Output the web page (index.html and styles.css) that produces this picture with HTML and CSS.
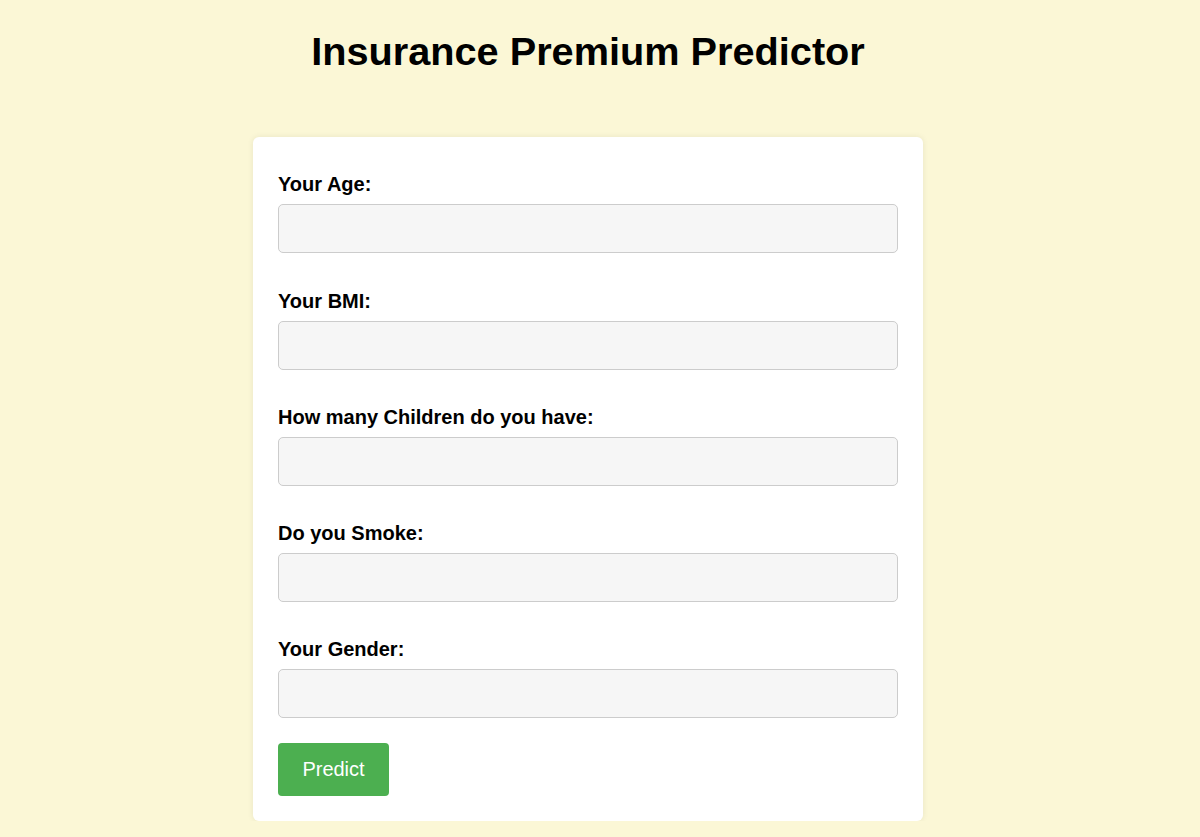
FILE: index.html
```html
<!DOCTYPE html>
<html lang="en">
<head>
<meta charset="utf-8">
<title>Insurance Premium Predictor</title>
<link rel="stylesheet" href="styles.css">
</head>
<body>
<h1 class="title">Insurance Premium Predictor</h1>
<form class="card">
  <div class="field">
    <label class="label" for="age">Your Age:</label>
    <input class="input" id="age" type="text">
  </div>
  <div class="field">
    <label class="label" for="bmi">Your BMI:</label>
    <input class="input" id="bmi" type="text">
  </div>
  <div class="field">
    <label class="label" for="children">How many Children do you have:</label>
    <input class="input" id="children" type="text">
  </div>
  <div class="field">
    <label class="label" for="smoke">Do you Smoke:</label>
    <input class="input" id="smoke" type="text">
  </div>
  <div class="field">
    <label class="label" for="gender">Your Gender:</label>
    <input class="input" id="gender" type="text">
  </div>
  <button class="btn" type="button">Predict</button>
</form>
</body>
</html>
```
FILE: styles.css
```css
html, body {
  margin: 0;
  padding: 0;
}
body {
  background: #fbf7d6;
  font-family: "Liberation Sans", Arial, sans-serif;
  color: #000;
  display: flex;
  flex-direction: column;
  align-items: center;
  padding-right: 24px;
}
.title {
  font-size: 39.7px;
  font-weight: bold;
  margin: 28px 0 0;
  line-height: 46px;
}
.card {
  margin-top: 63px;
  width: 620px;
  padding: 25px;
  background: #fff;
  border-radius: 6px;
  box-shadow: 0 0 6px rgba(0,0,0,0.08);
  display: flex;
  flex-direction: column;
}
.field {
  display: flex;
  flex-direction: column;
  margin-top: 11.25px;
  margin-bottom: 25px;
}
.label {
  font-size: 20px;
  font-weight: bold;
  line-height: 23px;
  margin-bottom: 8px;
}
.input {
  box-sizing: border-box;
  height: 49px;
  border: 1px solid #cccccc;
  border-radius: 5px;
  background: #f6f6f6;
  font-size: 16px;
  padding: 0 12px;
}
.btn {
  align-self: flex-start;
  width: 111px;
  height: 53px;
  background: #4caf50;
  color: #fff;
  border: none;
  border-radius: 4px;
  font-family: "Liberation Sans", Arial, sans-serif;
  font-size: 20px;
}
```
